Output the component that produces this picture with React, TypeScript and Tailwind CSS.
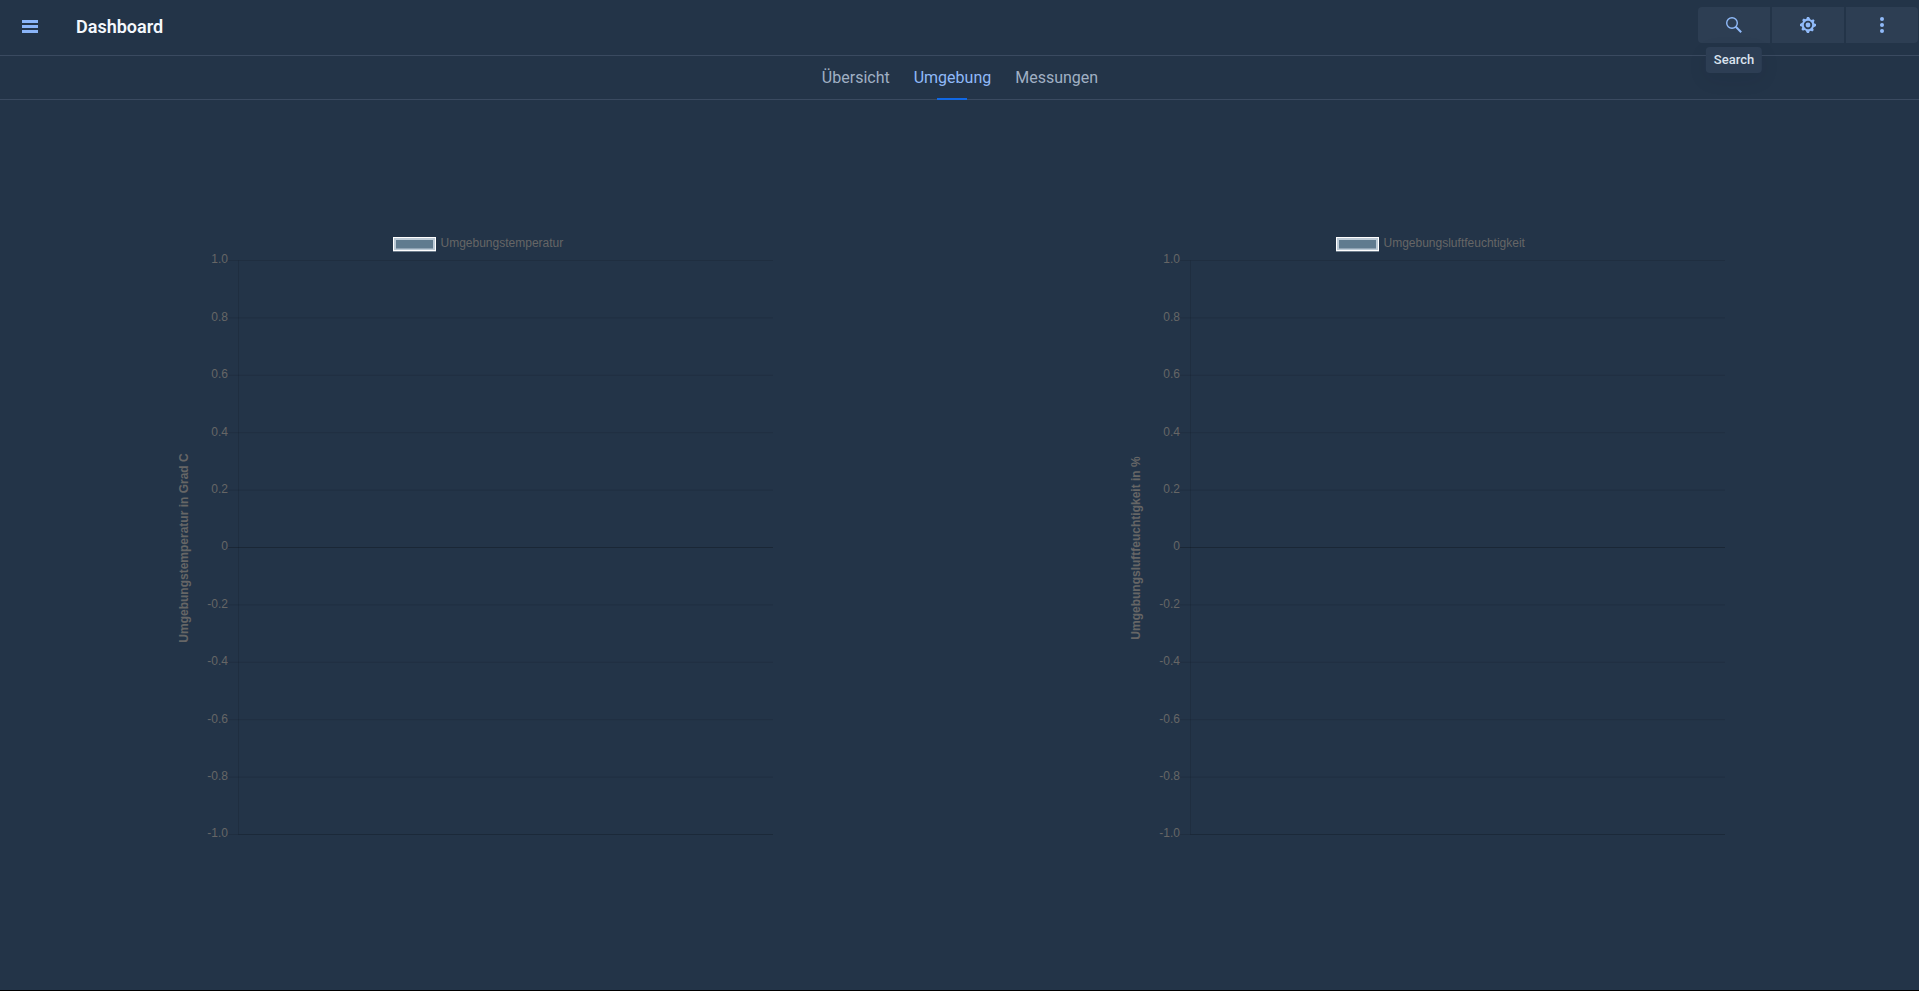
import React from "react";

const TICKS = ["1.0", "0.8", "0.6", "0.4", "0.2", "0", "-0.2", "-0.4", "-0.6", "-0.8", "-1.0"];

const TOP = 30.5;
const STEP = 57.4;
const AXIS_X = 64.5;
const RIGHT = 599;

function LineChart({ label, axisTitle, legendX }: { label: string; axisTitle: string; legendX: number }) {
  return (
    <svg
      viewBox="0 0 608 614"
      role="img"
      aria-label={label}
      className="h-auto w-[608px] max-w-full font-['Liberation_Sans',Arial,sans-serif] text-[12px]"
    >
      <rect x={legendX} y={8.5} width={40} height={11.5} fill="#607b8f" stroke="#bccad6" strokeWidth={3} />
      <rect x={legendX - 1} y={7.5} width={42} height={13} fill="none" stroke="#fff" strokeWidth={1} />
      <text x={legendX + 46} y={17} fill="#666">
        {label}
      </text>
      <text transform="translate(14 318) rotate(-90)" textAnchor="middle" fill="#666" fontWeight="bold">
        {axisTitle}
      </text>
      {TICKS.map((tick, i) => {
        const y = TOP + STEP * i;
        return (
          <g key={tick}>
            <text x={54} y={Math.round(y + 2.9)} textAnchor="end" fill="#666">
              {tick}
            </text>
            <line x1={54} x2={RIGHT} y1={y} y2={y} stroke="#000" strokeOpacity={tick === "0" ? 0.25 : 0.1} />
          </g>
        );
      })}
      <line x1={AXIS_X} x2={AXIS_X} y1={TOP} y2={TOP + STEP * 10} stroke="#000" strokeOpacity={0.1} />
      <line x1={AXIS_X} x2={RIGHT} y1={TOP + STEP * 10} y2={TOP + STEP * 10} stroke="#000" strokeOpacity={0.1} />
    </svg>
  );
}

function SearchIcon() {
  return (
    <svg viewBox="0 0 16 16" className="size-4" fill="none" stroke="currentColor" aria-hidden="true">
      <circle cx="6" cy="6" r="5.3" strokeWidth="1.4" />
      <path d="M9.8 9.8l5.4 5.4" strokeWidth="2" />
    </svg>
  );
}

function CogIcon() {
  return (
    <svg viewBox="0 0 16 16" className="size-4" fill="currentColor" aria-hidden="true">
      <path
        fillRule="evenodd"
        d="M16 9V7l-1.7-.6c-.1-.4-.3-.8-.5-1.2l.8-1.6-1.3-1.3-1.6.8c-.4-.2-.8-.4-1.2-.5L9 0H7l-.6 1.7c-.4.1-.8.3-1.2.5l-1.5-.8-1.5 1.5.8 1.5c-.2.4-.4.8-.5 1.2L0 7v2l1.7.6c.1.4.3.8.5 1.2l-.8 1.5 1.5 1.5 1.5-.8c.4.2.8.4 1.2.5L7 16h2l.6-1.7c.4-.1.8-.3 1.2-.5l1.5.8 1.5-1.5-.8-1.5c.2-.4.4-.8.5-1.2L16 9zM8 12.2a4.2 4.2 0 1 1 0-8.4 4.2 4.2 0 0 1 0 8.4z"
      />
      <circle cx="8" cy="8" r="2.4" />
    </svg>
  );
}

function DotsIcon() {
  return (
    <svg viewBox="0 0 16 16" className="size-4" fill="currentColor" aria-hidden="true">
      <circle cx="8" cy="2" r="2" />
      <circle cx="8" cy="8" r="2" />
      <circle cx="8" cy="14" r="2" />
    </svg>
  );
}

const actionClass = "flex h-9 w-[72px] items-center justify-center bg-[#2d3e53]";

export default function App() {
  return (
    <div className="flex min-h-screen flex-col border-b border-black bg-[#233448] font-[Roboto,sans-serif] text-[#90baf9]">
      <header className="flex h-14 items-start border-b border-[#3a4a60]">
        <button type="button" aria-label="Menu" className="mt-5 ml-[22px] flex h-[13px] w-4 flex-col justify-between">
          <span className="h-[3px] w-full bg-[#8ab4f8]" />
          <span className="h-[3px] w-full bg-[#8ab4f8]" />
          <span className="h-[3px] w-full bg-[#8ab4f8]" />
        </button>
        <h1 className="mt-4 ml-[38px] text-[18px] leading-[22px] font-semibold text-[#f4f8fd]">Dashboard</h1>
        <div className="mt-[7px] mr-px ml-auto flex gap-0.5">
          <div className="relative">
            <button type="button" aria-label="Search" aria-describedby="search-tip" className={`${actionClass} rounded-l`}>
              <SearchIcon />
            </button>
            <div
              id="search-tip"
              role="tooltip"
              className="absolute top-10 left-1/2 z-10 -translate-x-1/2 rounded bg-[#2d3e54] px-2 py-1 text-[13px] leading-[18px] font-medium text-[#dae3ee] shadow-[0_6px_20px_rgba(16,28,44,0.08)]"
            >
              Search
            </div>
          </div>
          <button type="button" aria-label="Settings" className={actionClass}>
            <CogIcon />
          </button>
          <button type="button" aria-label="More" className={`${actionClass} rounded-r`}>
            <DotsIcon />
          </button>
        </div>
      </header>
      <nav className="flex h-11 justify-center gap-6 border-b border-[#3a4a60] pl-px text-[16px] leading-[20px] text-[#a0b0c4]">
        <a href="#uebersicht" className="pt-3">
          Übersicht
        </a>
        <a href="#umgebung" aria-current="page" className="relative pt-3 text-[#90baf9]">
          Umgebung
          <span className="absolute -bottom-px left-1/2 h-0.5 w-[30px] -translate-x-1/2 bg-[#1168e4]" />
        </a>
        <a href="#messungen" className="pt-3">
          Messungen
        </a>
      </nav>
      <main className="grid grow grid-cols-2 items-start justify-items-center pt-[130px] pr-[13px] pl-0.5">
        <LineChart label="Umgebungstemperatur" axisTitle="Umgebungstemperatur in Grad C" legendX={220.5} />
        <LineChart label="Umgebungsluftfeuchtigkeit" axisTitle="Umgebungsluftfeuchtigkeit in %" legendX={211.5} />
      </main>
    </div>
  );
}
